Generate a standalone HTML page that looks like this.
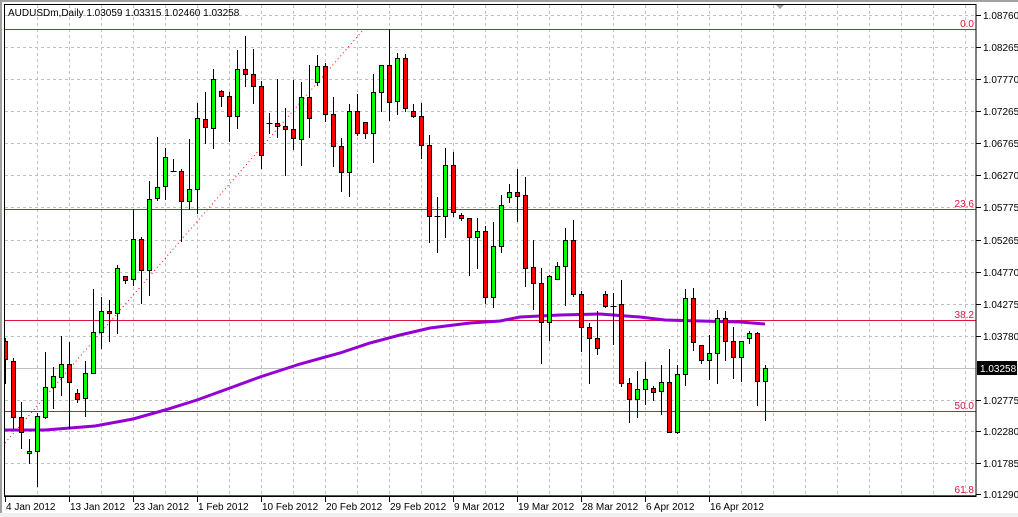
<!DOCTYPE html>
<html><head><meta charset="utf-8"><style>
html,body{margin:0;padding:0;background:#fff;width:1018px;height:517px;overflow:hidden}
svg{display:block}
text{font-family:"Liberation Sans",sans-serif;font-size:10px}
</style></head><body>
<svg id="s" width="1018" height="517" xmlns="http://www.w3.org/2000/svg">
<rect x="0" y="0" width="1018" height="517" fill="#fff"/>
<rect x="0" y="0" width="1018" height="2" fill="#a0a0a0"/>
<rect x="0" y="0" width="2" height="517" fill="#a0a0a0"/>
<rect x="0" y="513" width="1018" height="4" fill="#f0f0f0"/>
<g id="grid" stroke="#c0c0c0" stroke-width="1" stroke-dasharray="3,3"></g>
<g id="fib"></g>
<line x1="5" y1="368.5" x2="976" y2="368.5" stroke="#c0c0c0" stroke-width="1"/>
<line x1="5" y1="443" x2="364" y2="29" stroke="#ff0000" stroke-width="1" stroke-dasharray="1,3"/>
<polyline fill="none" stroke="#9400d3" stroke-width="3" points="4,430 45,430 70,428 95,426 133,419 165,410 197,400 230,388 260,377 300,364 340,353 370,343 400,335 430,328 470,323 500,321 520,317 560,315 600,314 640,317 665,320 700,321 740,322 765,324"/>
<g id="c"></g>
<rect x="4.5" y="4.5" width="971.5" height="492" fill="none" stroke="#000" stroke-width="1"/>
<polygon points="776,5 784,5 780,9" fill="#a0a0a0"/>
<text x="8" y="16" fill="#000" font-size="10.5">AUDUSDm,Daily  1.03059 1.03315 1.02460 1.03258</text>
<g id="ax"></g>
<rect x="977" y="361" width="40" height="14" fill="#000"/>
<text x="980" y="372" fill="#fff">1.03258</text>
</svg>
<script>
var NS="http://www.w3.org/2000/svg";
function el(p,t,a,txt){var e=document.createElementNS(NS,t);for(var k in a)e.setAttribute(k,a[k]);if(txt)e.textContent=txt;document.getElementById(p).appendChild(e);return e;}
var gy=[15,47,79,111,143,175,207,240,272,304,336,400,431,463,495];
gy.forEach(function(y){el('grid','line',{x1:5,x2:976,y1:y+.5,y2:y+.5});});
for(var x=37;x<976;x+=32)el('grid','line',{x1:x+.5,x2:x+.5,y1:5,y2:496});
var fib=[[29,"0.0"],[209,"23.6"],[320,"38.2"],[411,"50.0"],[495,"61.8"]];
fib.forEach(function(f){el('fib','line',{x1:5,x2:976,y1:f[0]+.5,y2:f[0]+.5,stroke:'#dc143c','stroke-width':1});el('fib','text',{x:974,y:f[0]-2,'text-anchor':'end',fill:'#dc143c'},f[1]);});
var labs=[[15,"1.08760"],[47,"1.08265"],[79,"1.07770"],[111,"1.07265"],[143,"1.06765"],[175,"1.06270"],[207,"1.05775"],[240,"1.05265"],[272,"1.04770"],[304,"1.04275"],[336,"1.03780"],[400,"1.02775"],[431,"1.02280"],[463,"1.01785"],[494,"1.01290"]];
labs.forEach(function(l){el('ax','line',{x1:976,x2:981,y1:l[0]+.5,y2:l[0]+.5,stroke:'#000'});el('ax','text',{x:983,y:l[0]+4,fill:'#000'},l[1]);});
var dates=["4 Jan 2012","13 Jan 2012","23 Jan 2012","1 Feb 2012","10 Feb 2012","20 Feb 2012","29 Feb 2012","9 Mar 2012","19 Mar 2012","28 Mar 2012","6 Apr 2012","16 Apr 2012"];
dates.forEach(function(d,i){var x=5+64*i;el('ax','line',{x1:x+.5,x2:x+.5,y1:497,y2:502,stroke:'#000'});el('ax','text',{x:x+1,y:510,fill:'#000'},d);});
// [type, bodyTop, bodyBot, wickTop, wickBot]  g=green r=red d=doji
var C=[
['r',341,359,338,383],['r',361,417,358,428],['r',417,432,402,448],['g',451,453,439,463],['g',416,451,413,486],
['g',387,417,352,418],['g',376,387,367,408],['g',364,377,336,395],['r',364,382,342,428],['r',393,399,389,402],
['g',373,398,361,416],['g',332,373,289,373],['g',311,332,297,348],['r',311,313,300,341],['g',268,313,265,333],
['r',276,280,276,283],['g',239,279,209,285],['r',239,270,237,303],['g',199,270,181,295],['g',187,198,137,200],
['g',157,186,148,199],['d',171,171,159,171],['r',171,201,169,241],['g',189,201,139,209],['g',118,189,103,213],
['r',119,127,92,143],['g',79,128,69,148],['r',91,96,90,106],['r',96,116,92,141],['g',69,116,50,128],
['r',69,74,36,86],['r',74,86,49,103],['r',86,155,81,168],['d',123,123,113,133],['r',123,126,79,137],
['r',126,129,108,175],['r',129,138,80,149],['g',97,139,82,165],['r',97,118,65,137],['g',66,82,55,85],
['r',66,114,63,121],['r',114,146,97,166],['r',146,172,138,191],['g',111,172,104,196],['r',111,133,94,135],
['r',122,133,122,138],['g',92,133,74,162],['g',65,92,65,111],['r',65,102,29,120],['g',58,101,53,114],
['r',58,108,54,111],['r',111,116,104,117],['r',116,145,103,158],['r',145,216,135,242],['d',216,216,197,252],
['g',165,216,148,237],['r',165,212,152,216],['r',215,218,213,220],['r',218,237,218,275],['g',231,237,218,268],
['r',231,297,226,303],['g',246,297,222,307],['g',205,246,195,252],['g',192,197,184,202],['r',192,196,169,221],
['r',195,268,177,286],['r',267,283,240,309],['r',283,322,268,363],['g',276,322,275,340],['g',266,279,262,279],
['g',240,266,228,305],['r',240,294,220,296],['r',294,327,291,351],['r',327,338,323,383],['r',338,348,311,354],
['r',294,306,291,307],['d',306,306,293,344],['r',304,383,280,386],['r',383,399,378,422],['g',389,399,371,417],
['g',379,389,362,404],['r',388,392,386,400],['g',382,391,365,414],['r',382,432,349,432],['g',374,432,365,433],
['g',298,374,289,385],['r',298,342,288,350],['r',345,360,345,363],['g',353,360,335,379],['g',318,353,310,383],
['r',318,341,311,360],['r',341,357,327,378],['g',341,357,341,381],['g',333,338,331,343],['r',333,381,332,405],
['g',368,381,365,420]];
C.forEach(function(c,i){var cx=5.5+8*i;
 el('c','line',{x1:cx,x2:cx,y1:c[3],y2:c[4]+1,stroke:'#000','stroke-width':1});
 if(c[0]=='d'){el('c','line',{x1:cx-3,x2:cx+3,y1:c[1]+.5,y2:c[1]+.5,stroke:'#000'});}
 else{var h=Math.max(c[2]-c[1],2);var x0=Math.max(cx-2,4.5);el('c','rect',{x:x0,y:c[1]+.5,width:cx+2-x0,height:h,fill:c[0]=='g'?'#00ff00':'#ff0000',stroke:'#000','stroke-width':1});}
});
</script>
</body></html>
